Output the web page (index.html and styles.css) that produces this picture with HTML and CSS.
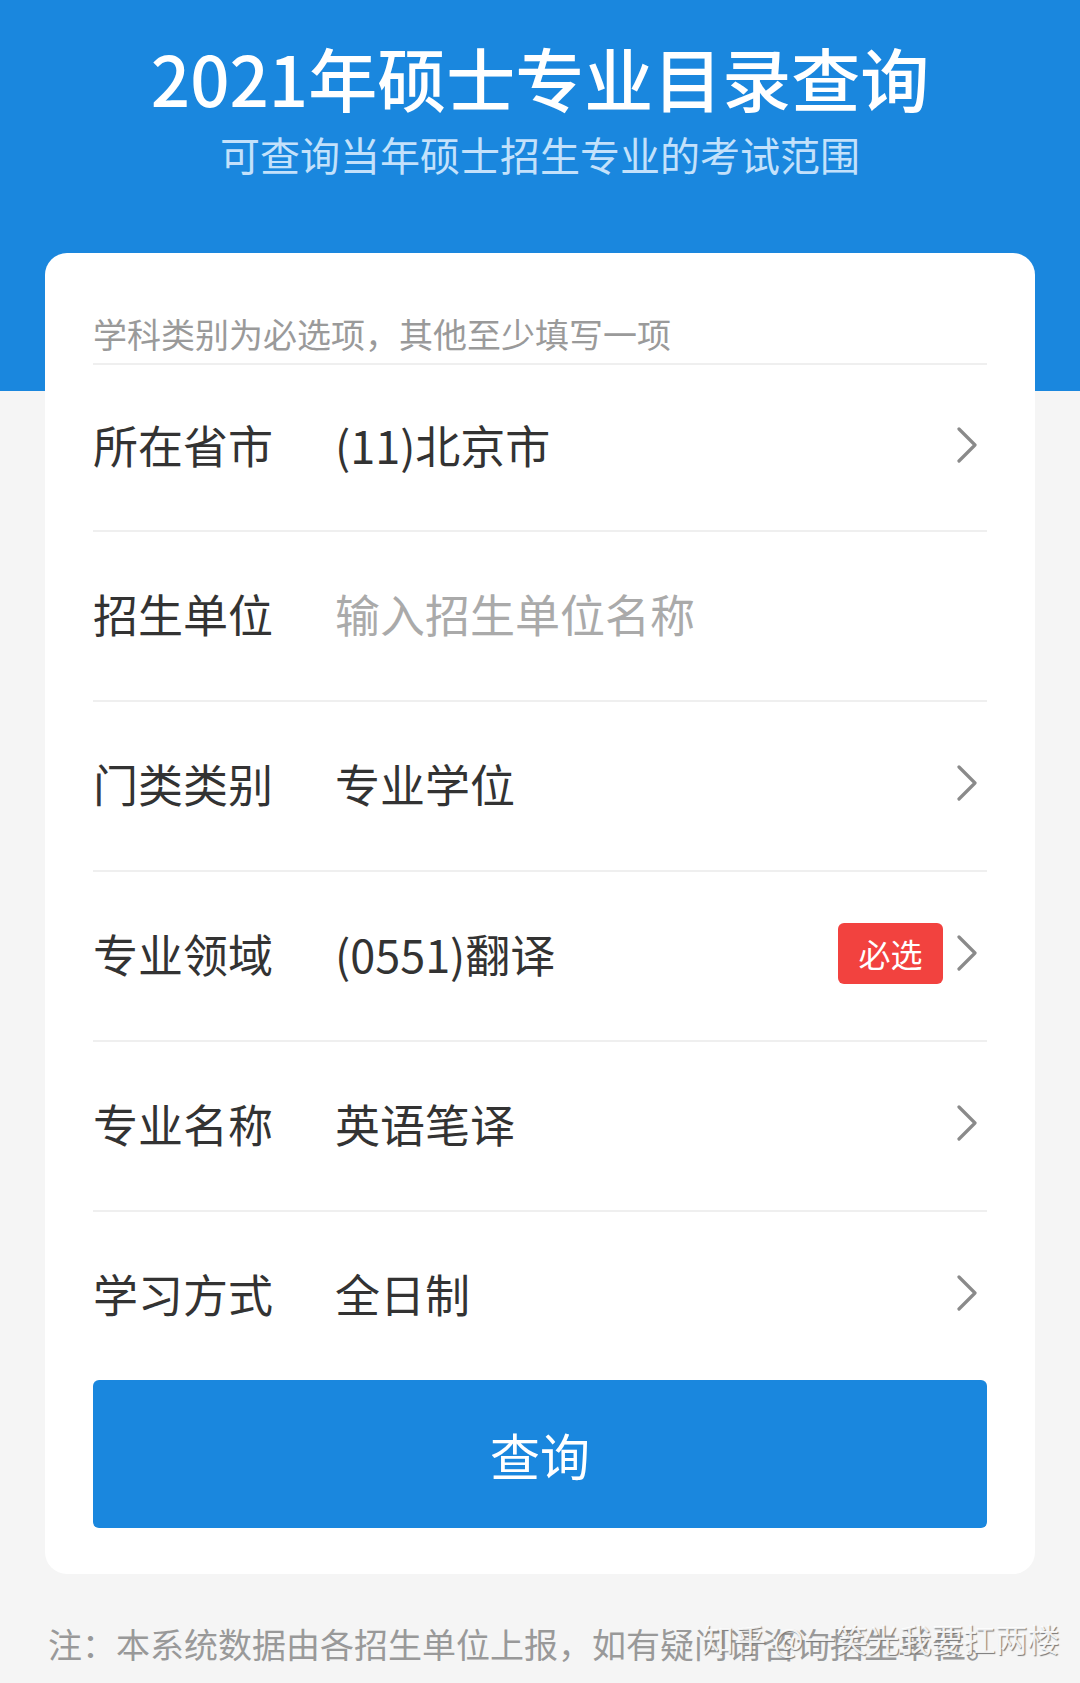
FILE: index.html
```html
<!DOCTYPE html>
<html>
  <head>
    <meta charset="utf-8">
    <title>2021年硕士专业目录查询</title>
    <link rel="stylesheet" href="styles.css">
  </head>
  <body>
    <div class="page">
      <div class="header">
        <h1 class="title">2021年硕士专业目录查询</h1>
        <p class="subtitle">可查询当年硕士招生专业的考试范围</p>
      </div>

      <div class="card">
        <div class="hint">学科类别为必选项，其他至少填写一项</div>

        <div class="row">
          <span class="label">所在省市</span>
          <span class="value">(11)北京市</span>
          <span class="arrow"><svg width="22" height="36" viewBox="0 0 22 36"><path d="M3 2 L19 18 L3 34" fill="none" stroke="#8a8a8a" stroke-width="3.2" stroke-linecap="round" stroke-linejoin="round"/></svg></span>
        </div>
        <div class="row">
          <span class="label">招生单位</span>
          <input class="value input" type="text" placeholder="输入招生单位名称">
        </div>
        <div class="row">
          <span class="label">门类类别</span>
          <span class="value">专业学位</span>
          <span class="arrow"><svg width="22" height="36" viewBox="0 0 22 36"><path d="M3 2 L19 18 L3 34" fill="none" stroke="#8a8a8a" stroke-width="3.2" stroke-linecap="round" stroke-linejoin="round"/></svg></span>
        </div>
        <div class="row">
          <span class="label">专业领域</span>
          <span class="value">(0551)翻译</span>
          <span class="badge">必选</span>
          <span class="arrow"><svg width="22" height="36" viewBox="0 0 22 36"><path d="M3 2 L19 18 L3 34" fill="none" stroke="#8a8a8a" stroke-width="3.2" stroke-linecap="round" stroke-linejoin="round"/></svg></span>
        </div>
        <div class="row">
          <span class="label">专业名称</span>
          <span class="value">英语笔译</span>
          <span class="arrow"><svg width="22" height="36" viewBox="0 0 22 36"><path d="M3 2 L19 18 L3 34" fill="none" stroke="#8a8a8a" stroke-width="3.2" stroke-linecap="round" stroke-linejoin="round"/></svg></span>
        </div>
        <div class="row last">
          <span class="label">学习方式</span>
          <span class="value">全日制</span>
          <span class="arrow"><svg width="22" height="36" viewBox="0 0 22 36"><path d="M3 2 L19 18 L3 34" fill="none" stroke="#8a8a8a" stroke-width="3.2" stroke-linecap="round" stroke-linejoin="round"/></svg></span>
        </div>

        <button class="search" type="button">查询</button>
      </div>

      <div class="note">
        注：本系统数据由各招生单位上报，如有疑问请咨询招生单位。
        <span class="watermark">知乎 @一笑光我要扛两楼</span>
      </div>
    </div>
  </body>
</html>
```

FILE: styles.css
```css
body {
  margin: 0;
  font-family: "Noto Sans CJK SC", "Noto Sans", sans-serif;
  background-color: #f5f5f5;
}

.page {
  width: 1080px;
  min-height: 1683px;
  background: linear-gradient(#1a87de 0, #1a87de 391px, #f5f5f5 391px);
}

.header {
  padding-top: 37px;
  height: 216px;
  text-align: center;
  color: white;
}

.title {
  margin: 0;
  font-size: 69px;
  line-height: 80px;
  font-weight: 500;
}

.subtitle {
  margin: 12px 0 0;
  font-size: 40px;
  line-height: 50px;
  color: #c3e1fb;
}

.card {
  margin: 0 45px;
  padding: 0 48px 46px;
  background-color: white;
  border-radius: 22px;
}

.hint {
  padding-top: 61px;
  height: 49px;
  font-size: 34px;
  line-height: 40px;
  color: #9a9a9a;
  border-bottom: 2px solid #efefef;
}

.row {
  box-sizing: border-box;
  display: flex;
  align-items: center;
  height: 170px;
  padding-bottom: 6px;
  border-bottom: 2px solid #efefef;
}

.hint + .row {
  height: 167px;
}

.row.last {
  height: 168px;
  border-bottom: none;
}

.label {
  width: 242px;
  flex-shrink: 0;
  font-size: 45px;
  color: #333;
}

.value {
  flex: 1;
  font-size: 45px;
  color: #333;
}

.input {
  border: none;
  outline: none;
  padding: 0;
  font-family: inherit;
  background: transparent;
}

.input::placeholder {
  color: #aaa;
}

.badge {
  width: 105px;
  height: 61px;
  line-height: 61px;
  text-align: center;
  font-size: 32px;
  color: white;
  background-color: #f2423f;
  border-radius: 6px;
  margin-right: 13px;
}

.arrow {
  width: 31px;
  display: flex;
  justify-content: flex-start;
}

.search {
  display: block;
  width: 100%;
  height: 148px;
  border: none;
  border-radius: 6px;
  background-color: #1a87de;
  color: white;
  font-family: inherit;
  font-size: 50px;
}

.note {
  position: relative;
  margin: 45px 0 0 48px;
  font-size: 34px;
  line-height: 50px;
  color: #999;
}

.watermark {
  position: absolute;
  left: 654px;
  top: -6px;
  font-size: 32px;
  color: rgba(255, 255, 255, 0.9);
  text-shadow: 1px 1px 1px #777;
  white-space: nowrap;
}
```
